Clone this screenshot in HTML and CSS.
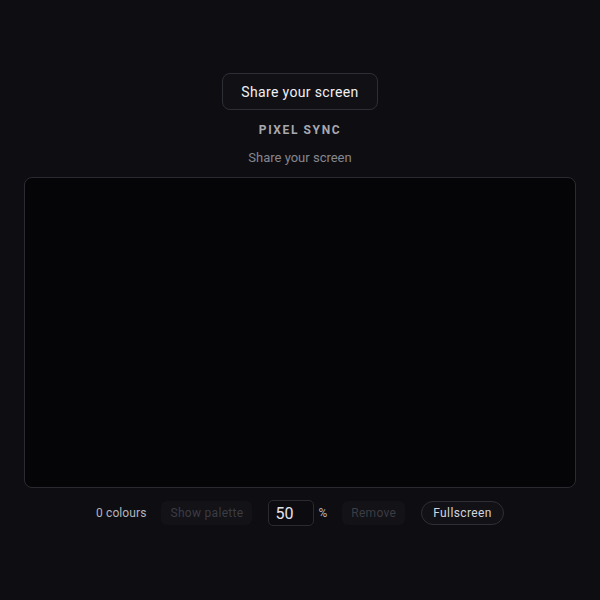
FILE: index.html
```html
<!DOCTYPE html>
<html>
<head>
<meta charset="utf-8">
<link rel="stylesheet" href="styles.css">
</head>
<body>
<main class="app">
  <button class="share-btn">Share your screen</button>
  <h1 class="title">PIXEL SYNC</h1>
  <p class="subtitle">Share your screen</p>
  <div class="canvas"></div>
  <div class="controls">
    <span class="count">0 colours</span>
    <button class="ghost" disabled>Show palette</button>
    <span class="scale"><input class="num" type="text" value="50"><span class="pct">%</span></span>
    <button class="ghost" disabled>Remove</button>
    <button class="pill">Fullscreen</button>
  </div>
</main>
</body>
</html>
```
FILE: styles.css
```css
html, body {
  margin: 0;
  padding: 0;
  background: #0e0e12;
  font-family: Roboto, "Noto Sans", sans-serif;
  color: #e4e4ea;
}
.app {
  display: flex;
  flex-direction: column;
  align-items: center;
  padding: 73px 24px 0;
}
.share-btn {
  width: 156px;
  height: 37px;
  background: #101015;
  border: 1px solid #2e2e36;
  border-radius: 8px;
  color: #f0f0f4;
  font-family: inherit;
  font-size: 14px;
  letter-spacing: 0.35px;
  padding: 0;
}
.title {
  margin: 13px 0 0;
  font-size: 12px;
  font-weight: 700;
  letter-spacing: 1.6px;
  color: #a8a8b0;
  line-height: 14px;
}
.subtitle {
  margin: 13px 0 0;
  font-size: 13px;
  color: #86868e;
  line-height: 15px;
}
.canvas {
  margin-top: 12px;
  width: 550px;
  height: 309px;
  background: #050507;
  border: 1px solid #2a2a31;
  border-radius: 8px;
}
.controls {
  margin-top: 12px;
  display: flex;
  align-items: center;
  font-size: 12px;
}
.count {
  color: #b4b4bc;
  margin-right: 15px;
  letter-spacing: 0.1px;
}
.ghost {
  background: #121217;
  border: none;
  border-radius: 6px;
  color: #3c3c44;
  font-family: inherit;
  font-size: 12px;
  letter-spacing: 0.3px;
  height: 24px;
  padding: 0 9px;
}
.scale {
  display: flex;
  align-items: center;
  margin: 0 15px 0 16px;
}
.num {
  width: 44px;
  height: 24px;
  box-sizing: content-box;
  padding: 0;
  text-indent: 6px;
  background: #0c0c10;
  border: 1px solid #2a2a31;
  border-radius: 5px;
  color: #e4e4ea;
  font-family: inherit;
  font-size: 16px;
  outline: none;
}
.pct {
  margin-left: 4px;
  color: #b4b4bc;
  font-size: 12px;
}
.pill {
  margin-left: 16px;
  height: 24px;
  padding: 0 11px;
  background: #111116;
  border: 1px solid #2e2e36;
  border-radius: 12px;
  color: #d4d4da;
  font-family: inherit;
  font-size: 12px;
  letter-spacing: 0.4px;
}
```
